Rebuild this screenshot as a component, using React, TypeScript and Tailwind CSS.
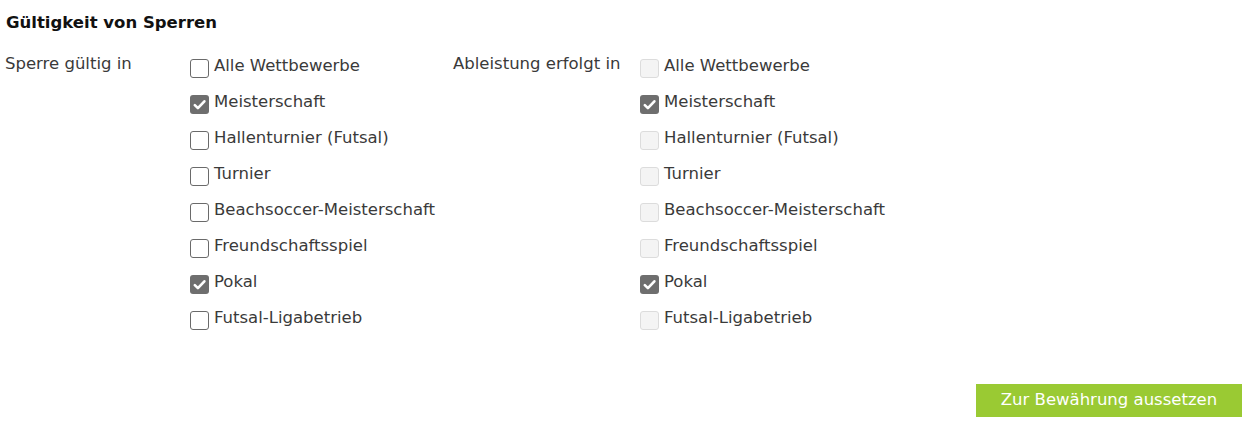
import React from "react";

type Item = { label: string; checked: boolean };

const items: Item[] = [
  { label: "Alle Wettbewerbe", checked: false },
  { label: "Meisterschaft", checked: true },
  { label: "Hallenturnier (Futsal)", checked: false },
  { label: "Turnier", checked: false },
  { label: "Beachsoccer-Meisterschaft", checked: false },
  { label: "Freundschaftsspiel", checked: false },
  { label: "Pokal", checked: true },
  { label: "Futsal-Ligabetrieb", checked: false },
];

const Box: React.FC<{ checked: boolean; disabled?: boolean }> = ({ checked, disabled }) => {
  if (checked) {
    return (
      <span className="flex h-[19px] w-[19px] shrink-0 items-center justify-center rounded-[3px] bg-[#6e6e6e]">
        <svg width="15" height="15" viewBox="0 0 16 16" fill="none">
          <path d="M3 8.6l3.3 3.3L13.2 4.6" stroke="#fff" strokeWidth="2.8" strokeLinecap="round" strokeLinejoin="round" />
        </svg>
      </span>
    );
  }
  return (
    <span
      className={
        disabled
          ? "h-[19px] w-[19px] shrink-0 rounded-[3px] border border-[#dcdcdc] bg-[#f4f4f4]"
          : "h-[19px] w-[19px] shrink-0 rounded-[3px] border border-[#6a6a6a] bg-white"
      }
    />
  );
};

const CheckList: React.FC<{ disabled?: boolean; width: string }> = ({ disabled, width }) => (
  <div className={`flex flex-col ${width}`}>
    {items.map((it) => (
      <label key={it.label} className="flex h-9 items-center gap-[5px]">
        <Box checked={it.checked} disabled={disabled} />
        <span className="-mt-[4px] whitespace-nowrap">{it.label}</span>
      </label>
    ))}
  </div>
);

export default function App() {
  return (
    <div className="h-[427px] w-[1255px] bg-white font-['DejaVu_Sans',Verdana,sans-serif] text-[16.5px] text-[#3a3a3a]">
      <h2 className="px-[6px] pt-[11px] text-[16.5px] font-bold text-[#111]">Gültigkeit von Sperren</h2>
      <div className="mt-[15px] flex">
        <div className="w-[190px] pl-[5px] leading-9">
          <span className="-mt-[5px] block">Sperre gültig in</span>
        </div>
        <CheckList width="w-[263px]" />
        <div className="w-[187px] leading-9">
          <span className="-mt-[5px] block">Ableistung erfolgt in</span>
        </div>
        <CheckList width="w-[300px]" disabled />
      </div>
      <div className="mt-[45px] flex justify-end pr-[13px]">
        <button className="h-[33px] w-[266px] bg-[#9aca33] text-[16.5px] text-white">Zur Bewährung aussetzen</button>
      </div>
    </div>
  );
}
